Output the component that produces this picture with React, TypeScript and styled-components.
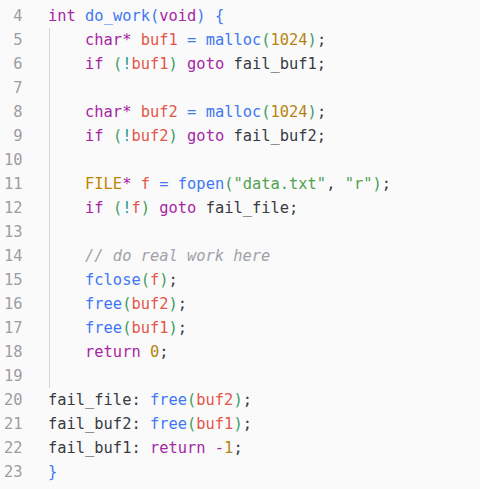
import React from "react";
import styled, { createGlobalStyle } from "styled-components";

const Global = createGlobalStyle`
  html, body { margin: 0; padding: 0; background: #fafafa; }
  #root { width: 480px; height: 489px; }
`;

type Kind = "kw" | "fn" | "var" | "num" | "str" | "type" | "op" | "paren" | "brace" | "bang" | "plain" | "comment";

const colors: Record<Kind, string> = {
  kw: "#a626a4",
  fn: "#4078f2",
  var: "#e45649",
  num: "#b5850f",
  str: "#50a14f",
  type: "#c18401",
  op: "#4078f2",
  paren: "#3f9e62",
  brace: "#4078f2",
  bang: "#1a9aa0",
  plain: "#383a42",
  comment: "#a0a1a7",
};

const Editor = styled.div`
  width: 480px;
  height: 489px;
  box-sizing: border-box;
  padding-top: 4px;
  background: #fafafa;
  font-family: "DejaVu Sans Mono", "Liberation Mono", monospace;
  font-size: 15.4px;
  display: flex;
  flex-direction: column;
`;

const Row = styled.div`
  display: grid;
  grid-template-columns: 22.5px 1fr;
  column-gap: 25.5px;
  height: 24px;
  line-height: 24px;
  white-space: pre;
`;

const LineNo = styled.span`
  color: #9d9d9f;
  text-align: right;
`;

const Code = styled.span`
  color: #383a42;
  display: flex;
  align-items: stretch;
`;

const Indent = styled.span`
  display: inline-block;
  width: calc(4ch - 1px);
  margin-left: 1px;
  border-left: 1px solid #d6d6d6;
  box-sizing: border-box;
  height: 24px;
  flex: none;
`;

const Tok = styled.span<{ $k: Kind }>`
  color: ${(p) => colors[p.$k]};
  font-style: ${(p) => (p.$k === "comment" ? "italic" : "normal")};
`;

type T = [Kind, string];
type Line = { n: number; indent: boolean; toks: T[] };

const sp: T = ["plain", " "];

const lines: Line[] = [
  { n: 4, indent: false, toks: [["kw", "int"], sp, ["fn", "do_work"], ["brace", "("], ["kw", "void"], ["brace", ")"], sp, ["brace", "{"]] },
  { n: 5, indent: true, toks: [["kw", "char"], ["kw", "*"], sp, ["var", "buf1"], sp, ["op", "="], sp, ["fn", "malloc"], ["paren", "("], ["num", "1024"], ["paren", ")"], ["plain", ";"]] },
  { n: 6, indent: true, toks: [["kw", "if"], sp, ["paren", "("], ["bang", "!"], ["var", "buf1"], ["paren", ")"], sp, ["kw", "goto"], ["plain", " fail_buf1;"]] },
  { n: 7, indent: true, toks: [] },
  { n: 8, indent: true, toks: [["kw", "char"], ["kw", "*"], sp, ["var", "buf2"], sp, ["op", "="], sp, ["fn", "malloc"], ["paren", "("], ["num", "1024"], ["paren", ")"], ["plain", ";"]] },
  { n: 9, indent: true, toks: [["kw", "if"], sp, ["paren", "("], ["bang", "!"], ["var", "buf2"], ["paren", ")"], sp, ["kw", "goto"], ["plain", " fail_buf2;"]] },
  { n: 10, indent: true, toks: [] },
  { n: 11, indent: true, toks: [["type", "FILE"], ["kw", "*"], sp, ["var", "f"], sp, ["op", "="], sp, ["fn", "fopen"], ["paren", "("], ["str", "\"data.txt\""], ["plain", ", "], ["str", "\"r\""], ["paren", ")"], ["plain", ";"]] },
  { n: 12, indent: true, toks: [["kw", "if"], sp, ["paren", "("], ["bang", "!"], ["var", "f"], ["paren", ")"], sp, ["kw", "goto"], ["plain", " fail_file;"]] },
  { n: 13, indent: true, toks: [] },
  { n: 14, indent: true, toks: [["comment", "// do real work here"]] },
  { n: 15, indent: true, toks: [["fn", "fclose"], ["paren", "("], ["var", "f"], ["paren", ")"], ["plain", ";"]] },
  { n: 16, indent: true, toks: [["fn", "free"], ["paren", "("], ["var", "buf2"], ["paren", ")"], ["plain", ";"]] },
  { n: 17, indent: true, toks: [["fn", "free"], ["paren", "("], ["var", "buf1"], ["paren", ")"], ["plain", ";"]] },
  { n: 18, indent: true, toks: [["kw", "return"], sp, ["num", "0"], ["plain", ";"]] },
  { n: 19, indent: true, toks: [] },
  { n: 20, indent: false, toks: [["plain", "fail_file: "], ["fn", "free"], ["paren", "("], ["var", "buf2"], ["paren", ")"], ["plain", ";"]] },
  { n: 21, indent: false, toks: [["plain", "fail_buf2: "], ["fn", "free"], ["paren", "("], ["var", "buf1"], ["paren", ")"], ["plain", ";"]] },
  { n: 22, indent: false, toks: [["plain", "fail_buf1: "], ["kw", "return"], sp, ["kw", "-"], ["num", "1"], ["plain", ";"]] },
  { n: 23, indent: false, toks: [["brace", "}"]] },
];

export default function App() {
  return (
    <>
      <Global />
      <Editor>
        {lines.map((l) => (
          <Row key={l.n}>
            <LineNo>{l.n}</LineNo>
            <Code>
              {l.indent && <Indent />}
              <span>
                {l.toks.map((t, i) => (
                  <Tok key={i} $k={t[0]}>
                    {t[1]}
                  </Tok>
                ))}
              </span>
            </Code>
          </Row>
        ))}
      </Editor>
    </>
  );
}
